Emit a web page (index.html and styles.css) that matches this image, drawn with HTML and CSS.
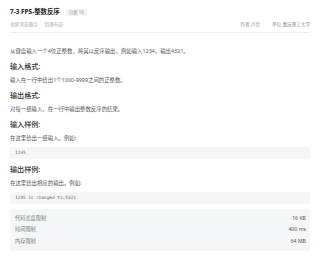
FILE: index.html
```html
<!DOCTYPE html>
<html lang="zh">
<head>
    <meta charset="UTF-8">
    <meta name="viewport" content="width=device-width, initial-scale=1.0">
    <title>7-3 FP5-整数反序</title>
    <link rel="stylesheet" href="styles.css">
</head>
<body>
    <div class="container">
        <div class="problem-header">
            <div class="title-row">
                <h1 class="problem-title">7-3 FP5-整数反序</h1>
                <span class="score-badge">分数 16</span>
            </div>
            <div class="sub-row">
                <div class="sub-links">
                    <span>全屏浏览题目</span>
                    <span>切换布局</span>
                </div>
                <div class="meta">
                    <span>作者 卢玲</span>
                    <span>单位 重庆理工大学</span>
                </div>
            </div>
        </div>

        <div class="problem-body">
            <p class="first">从键盘输入一个4位正整数，将其以反序输出，例如输入1234，输出4321。</p>

            <h2>输入格式:</h2>
            <p>输入在一行中给出1个1000-9999之间的正整数。</p>

            <h2>输出格式:</h2>
            <p>对每一组输入，在一行中输出整数反序的结果。</p>

            <h2>输入样例:</h2>
            <p>在这里给出一组输入。例如:</p>
            <pre class="sample">1235</pre>

            <h2>输出样例:</h2>
            <p>在这里给出相应的输出。例如:</p>
            <pre class="sample">1235 is changed to:5321</pre>
        </div>

        <div class="limits">
            <div class="limit-row">
                <span>代码长度限制</span>
                <span class="value">16 KB</span>
            </div>
            <div class="limit-row">
                <span>时间限制</span>
                <span class="value">400 ms</span>
            </div>
            <div class="limit-row">
                <span>内存限制</span>
                <span class="value">64 MB</span>
            </div>
        </div>
    </div>
</body>
</html>
```

FILE: styles.css
```css
* {
    margin: 0;
    padding: 0;
    box-sizing: border-box;
    font-family: "Noto Sans", "Noto Sans CJK SC", sans-serif;
}

body {
    background: #FFFFFF;
    color: #333;
    width: 320px;
}

.container {
    padding: 0 10px;
}

.problem-header {
    border-bottom: 1px solid #EEEEEE;
    padding-bottom: 3px;
}

.title-row {
    display: flex;
    align-items: center;
    gap: 6px;
    padding-top: 6px;
    height: 18px;
}

.problem-title {
    font-size: 6.4px;
    font-weight: 700;
    line-height: 12px;
    color: #222;
}

.score-badge {
    background: #F2F3F5;
    color: #A0A4AA;
    font-size: 4.4px;
    line-height: 7px;
    padding: 0 3px;
    border-radius: 2px;
}

.sub-row {
    display: flex;
    justify-content: space-between;
    align-items: center;
    margin-top: 2px;
    line-height: 9px;
    font-size: 4.6px;
    color: #A8ABB0;
}

.sub-links,
.meta {
    display: flex;
    gap: 7px;
}

.meta {
    color: #8A8E94;
    gap: 12px;
}

.problem-body {
    margin-top: 13px;
}

.problem-body p {
    font-size: 5.4px;
    line-height: 10px;
    color: #555;
}

.problem-body h2 {
    font-size: 7.1px;
    font-weight: 500;
    line-height: 12px;
    color: #333;
    margin: 4px 0 3px;
}

.sample {
    background: #F5F6F8;
    border-radius: 2px;
    font-family: "DejaVu Sans Mono", "Liberation Mono", monospace;
    font-size: 4.4px;
    line-height: 12px;
    color: #666;
    padding: 0 5px;
    margin-top: 4px;
}

.limits {
    margin-top: 5px;
    background: #F5F6F8;
    border-radius: 3px;
    padding: 4px 4px 4px 5px;
}

.limit-row {
    display: flex;
    justify-content: space-between;
    font-size: 5.2px;
    line-height: 11.4px;
    color: #777;
}

.limit-row .value {
    color: #555;
}
```
